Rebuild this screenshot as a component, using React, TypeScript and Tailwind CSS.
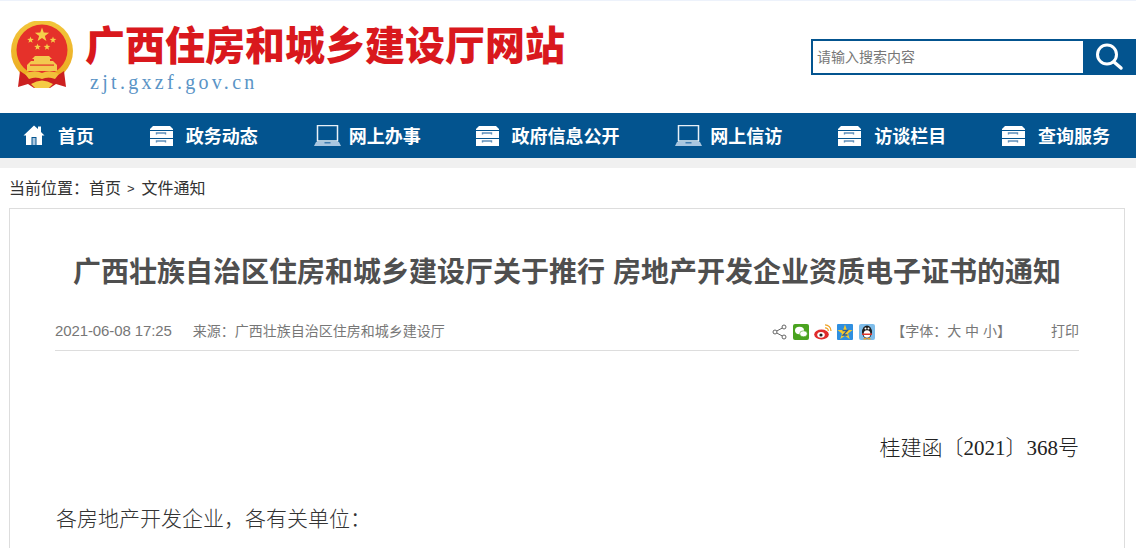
import type { ReactNode } from "react";

const sans = "font-['Liberation_Sans','Noto_Sans_CJK_SC',sans-serif]";
const serif = "font-['Liberation_Serif','Noto_Sans_CJK_SC',serif]";

// five point star around cx,cy
const starPoints = (cx: number, cy: number, r: number) => {
  const pts: string[] = [];
  for (let i = 0; i < 10; i++) {
    const rad = i % 2 === 0 ? r : r * 0.4;
    const a = (Math.PI / 5) * i - Math.PI / 2;
    pts.push(`${cx + rad * Math.cos(a)},${cy + rad * Math.sin(a)}`);
  }
  return pts.join(" ");
};

function Emblem() {
  return (
    <svg width="64" height="68" viewBox="0 0 64 68" className="shrink-0">
      <defs>
        <linearGradient id="gold" x1="0" y1="0" x2="0" y2="1">
          <stop offset="0" stopColor="#f2c63c" />
          <stop offset="1" stopColor="#eba91f" />
        </linearGradient>
      </defs>
      <circle cx="32" cy="30" r="31" fill="url(#gold)" />
      <circle cx="32" cy="29" r="25.500" fill="#e5312a" />
      <polygon points={starPoints(32, 14, 7.5)} fill="#f5cf4a" />
      <polygon points={starPoints(20.500, 19, 3.500)} fill="#f5cf4a" />
      <polygon points={starPoints(43, 19, 3.500)} fill="#f5cf4a" />
      <polygon points={starPoints(27.500, 26, 3.500)} fill="#f5cf4a" />
      <polygon points={starPoints(37, 26, 3.500)} fill="#f5cf4a" />
      <path d="M25 35 H39 L42 38 H40 V40 H43 L47 44 V50 H17 V44 L21 40 H24 V38 H22 Z" fill="#f3c94f" />
      <rect x="20" y="43.500" width="24" height="1.200" fill="#e5312a" />
      <path d="M10 50 L8 66 L18 63 L24 67 L40 67 L46 63 L56 66 L54 50 Q44 58 32 56 Q20 58 10 50 Z" fill="#cc2020" />
      <path d="M15 53 Q24 48 32 52 Q40 48 49 53 L45 58 Q38 55 32 58 Q26 55 19 58 Z" fill="#f2c03a" />
      <path d="M21 63 Q32 56 43 63 L39 67 H25 Z" fill="#f5cb45" />
    </svg>
  );
}

function HomeIcon() {
  return (
    <svg width="22" height="21" viewBox="0 0 22 21" className="shrink-0">
      <path d="M11 0.500 L15 4 V1.500 H18 V7 L21.500 10.500 H19 V20 H13.500 V12 H8.500 V20 H3 V10.500 H0.500 Z" fill="#fff" />
      <rect x="9.500" y="13" width="3" height="7" fill="#a9c6e0" />
    </svg>
  );
}

function DrawerIcon() {
  return (
    <svg width="23" height="20" viewBox="0 0 23 20" className="shrink-0">
      <path d="M3 0 H20 L23 3 V4 H0 V3 Z" fill="#fff" />
      <rect x="0" y="5" width="23" height="7" fill="#fff" />
      <rect x="0" y="13" width="23" height="7" fill="#fff" />
      <path d="M6.500 8.500 V7 H15.500 V8.500 M6.500 16.500 V15 H15.500 V16.500" fill="none" stroke="#5f8fb9" strokeWidth="1.400" />
    </svg>
  );
}

function LaptopIcon() {
  return (
    <svg width="27" height="21" viewBox="0 0 27 21" className="shrink-0">
      <rect x="3.500" y="0.500" width="20" height="15.500" fill="none" stroke="#e8f0f7" strokeWidth="1.500" />
      <path d="M2 17 H25 L27 21 H0 Z" fill="#a9c6e0" />
      <rect x="10.500" y="17" width="6" height="1.500" fill="#3f7cb0" />
    </svg>
  );
}

function NavItem({ icon, label, gap }: { icon: ReactNode; label: string; gap: string }) {
  return (
    <a className={`flex items-center text-[18px] font-bold text-white ${gap}`}>
      {icon}
      <span className="mt-[3px]">{label}</span>
    </a>
  );
}

function ShareIcons() {
  return (
    <div className="flex items-center">
      <svg width="15" height="16" viewBox="0 0 15 16" fill="none" stroke="#666" strokeWidth="1">
        <circle cx="3" cy="8" r="2" />
        <circle cx="12" cy="3" r="2" />
        <circle cx="12" cy="13" r="2" />
        <path d="M4.800 7 L10.300 4 M4.800 9 L10.300 12" />
      </svg>
      <svg width="16" height="16" viewBox="0 0 16 16" className="ml-[6px]">
        <rect width="16" height="16" rx="2" fill="#4aa31f" />
        <ellipse cx="6.500" cy="6.500" rx="4.500" ry="3.700" fill="#fff" />
        <ellipse cx="10.500" cy="9.800" rx="3.800" ry="3" fill="#fff" stroke="#4aa31f" strokeWidth="0.600" />
      </svg>
      <svg width="18" height="16" viewBox="0 0 18 16" className="ml-[5px]">
        <ellipse cx="7.500" cy="10.500" rx="7.300" ry="5" fill="#e02b2b" />
        <ellipse cx="7" cy="10.800" rx="3.800" ry="2.900" fill="#fff" />
        <circle cx="7" cy="11" r="1.600" fill="#222" />
        <path d="M11 0.800 A6 6 0 0 1 17 7 M11 3.800 A3 3 0 0 1 14.300 7" fill="none" stroke="#f0a020" strokeWidth="1.300" />
      </svg>
      <svg width="16" height="16" viewBox="0 0 16 16" className="ml-[5px]">
        <rect width="16" height="16" rx="1" fill="#2f8fe0" />
        <polygon points={starPoints(8, 8.500, 8)} fill="#f7c92c" />
        <path d="M5.500 6.500 H10.500 L6 11 H10.500" fill="none" stroke="#2a5b96" strokeWidth="1.300" />
      </svg>
      <svg width="16" height="16" viewBox="0 0 16 16" className="ml-[6px]">
        <rect width="16" height="16" rx="2" fill="#7fbdea" />
        <ellipse cx="8" cy="8" rx="5" ry="6.500" fill="#1d1d1d" />
        <ellipse cx="8" cy="10" rx="3.400" ry="3.800" fill="#fff" />
        <circle cx="6.500" cy="4.500" r="1" fill="#fff" />
        <circle cx="9.500" cy="4.500" r="1" fill="#fff" />
        <path d="M3 9.500 H13 V11 H3 Z" fill="#e0332a" />
        <path d="M4.500 14 H7.500 V15.500 H4.500 Z M8.500 14 H11.500 V15.500 H8.500 Z" fill="#f0a020" />
      </svg>
    </div>
  );
}

export default function App() {
  return (
    <div className={`h-[548px] overflow-hidden bg-white ${sans}`}>
      <div className="h-px bg-[#edf2fb]" />

      {/* header */}
      <div className="flex h-[112px] justify-between pl-[10px]">
        <div className="flex pt-[20px]">
          <Emblem />
          <div className="ml-[11px]">
            <h1 className="text-[40px] font-black leading-[50px] text-[#d9181d]">
              广西住房和城乡建设厅网站
            </h1>
            <div className="ml-[5px] mt-[-1px] font-['Liberation_Serif',serif] text-[20px] leading-[24px] tracking-[3.300px] text-[#5a94c6]">
              zjt.gxzf.gov.cn
            </div>
          </div>
        </div>
        <div className="mt-[38px] flex h-[36px] w-[325px] border-[2px] border-[#03548f]">
          <div className="flex flex-1 items-center pl-[4px] text-[14px] text-[#777]">请输入搜索内容</div>
          <button className="flex w-[51px] items-center justify-center bg-[#03548f]">
            <svg width="30" height="30" viewBox="0 0 30 30" fill="none" stroke="#fff">
              <circle cx="13" cy="12.500" r="9.500" strokeWidth="3" />
              <path d="M20 20 L27 26" strokeWidth="3.500" strokeLinecap="round" />
            </svg>
          </button>
        </div>
      </div>

      {/* nav */}
      <nav className="flex h-[45px] items-center justify-between bg-[#03548f] pl-[23px] pr-[26px]">
        <NavItem icon={<HomeIcon />} label="首页" gap="gap-[13px]" />
        <NavItem icon={<DrawerIcon />} label="政务动态" gap="gap-[13px]" />
        <NavItem icon={<LaptopIcon />} label="网上办事" gap="gap-[8px]" />
        <NavItem icon={<DrawerIcon />} label="政府信息公开" gap="gap-[12px]" />
        <NavItem icon={<LaptopIcon />} label="网上信访" gap="gap-[8px]" />
        <NavItem icon={<DrawerIcon />} label="访谈栏目" gap="gap-[13px]" />
        <NavItem icon={<DrawerIcon />} label="查询服务" gap="gap-[13px]" />
      </nav>
      <div className="h-[10px] bg-[#f0f0f0]" />

      {/* breadcrumb */}
      <div className="flex h-[40px] items-center pl-[9px] pt-[2px] text-[16px] text-[#333]">
        当前位置：首页<span className="ml-[6px] mr-[7px] text-[13px]">&gt;</span>文件通知
      </div>

      {/* article */}
      <div className="ml-[9px] h-[400px] w-[1116px] border border-[#dddddd] px-[45px]">
        <h2 className="pt-[46px] text-center text-[28px] font-bold leading-[36px] text-[#4f4f4f]">
          广西壮族自治区住房和城乡建设厅关于推行 房地产开发企业资质电子证书的通知
        </h2>
        <div className="mt-[19px] flex h-[41px] items-center justify-between border-b border-[#dddddd] pt-[3px] text-[14px] text-[#777]">
          <div className="flex items-center gap-[21px]">
            <span className="text-[15px] tracking-[-0.100px]">2021-06-08 17:25</span>
            <span>来源：广西壮族自治区住房和城乡建设厅</span>
          </div>
          <div className="flex items-center">
            <ShareIcons />
            <span className="ml-[16px]">【字体：大 中 小】</span>
            <span className="ml-[40px]">打印</span>
          </div>
        </div>
        <div className={`pt-[83px] text-right text-[21px] font-light leading-[28px] text-[#222] ${serif}`}>
          桂建函〔2021〕368号
        </div>
        <div className={`pt-[43px] pl-[1px] text-[21px] font-light leading-[28px] text-[#333] ${serif}`}>
          各房地产开发企业，各有关单位：
        </div>
      </div>
    </div>
  );
}
